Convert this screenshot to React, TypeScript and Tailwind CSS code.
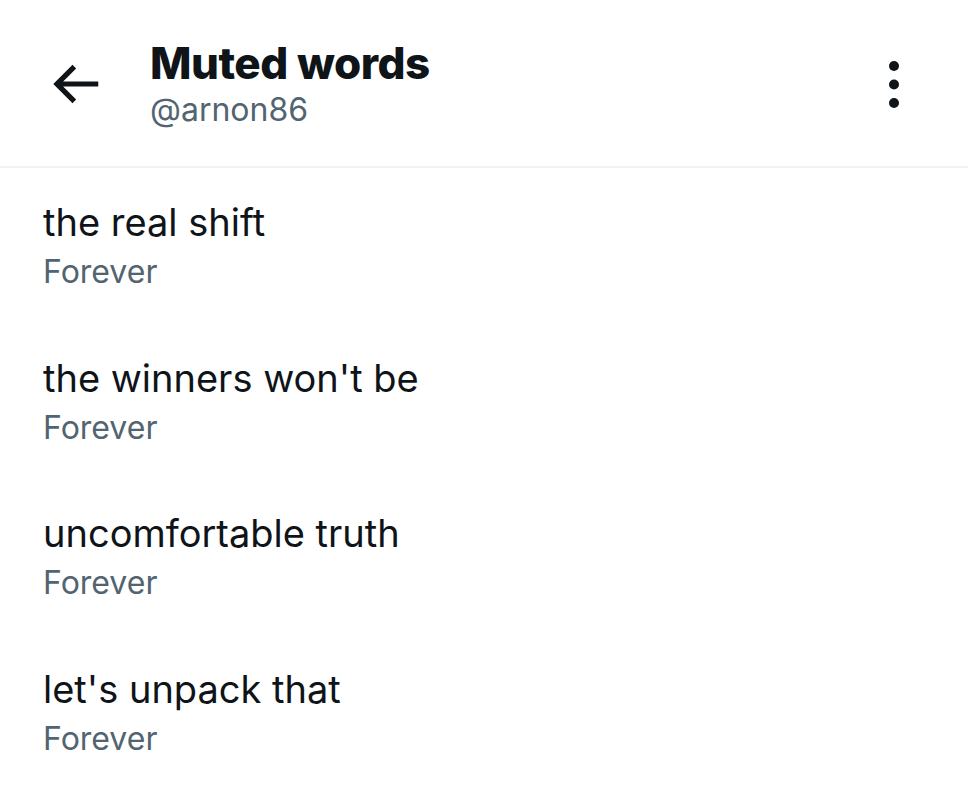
import React from 'react';

const mutedWords = [
  { word: 'the real shift', duration: 'Forever' },
  { word: "the winners won't be", duration: 'Forever' },
  { word: 'uncomfortable truth', duration: 'Forever' },
  { word: "let's unpack that", duration: 'Forever' },
];

const BackArrow = () => (
  <svg viewBox="0 0 24 24" className="w-[62px] h-[62px]" fill="#0f1419">
    <path d="M7.414 13l5.043 5.04-1.414 1.42L3.586 12l7.457-7.46 1.414 1.42L7.414 11H21v2H7.414z" />
  </svg>
);

const MoreVertical = () => (
  <svg viewBox="0 0 10 47" className="w-[10px] h-[47px]" fill="#0f1419">
    <circle cx="5" cy="5" r="5" />
    <circle cx="5" cy="23.5" r="5" />
    <circle cx="5" cy="42" r="5" />
  </svg>
);

export default function App() {
  return (
    <div className="w-[968px] h-[785px] bg-white overflow-hidden" style={{ fontFamily: 'Inter, "Noto Sans", sans-serif' }}>
      {/* header */}
      <header className="h-[168px] flex items-start border-b-2 border-[#eff3f4]">
        <div className="w-[150px] pl-[44px] pt-[53px] flex">
          <BackArrow />
        </div>
        <div className="flex-1 flex flex-col pt-[35px]">
          <h1 className="text-[44px] leading-[56px] font-extrabold text-[#0f1419] tracking-[-0.5px]">Muted words</h1>
          <p className="text-[32px] leading-[38px] text-[#536471]">@arnon86</p>
        </div>
        <div className="pr-[69px] pt-[61px]">
          <MoreVertical />
        </div>
      </header>

      {/* list */}
      <div className="flex flex-col">
        {mutedWords.map((item, i) => (
          <div key={i} className="h-[155.5px] px-[43px] pt-[29px] flex flex-col">
            <span className="text-[38px] leading-[50px] text-[#0f1419]">{item.word}</span>
            <span className="mt-[3px] text-[32px] leading-[44px] text-[#536471]">{item.duration}</span>
          </div>
        ))}
      </div>
    </div>
  );
}
